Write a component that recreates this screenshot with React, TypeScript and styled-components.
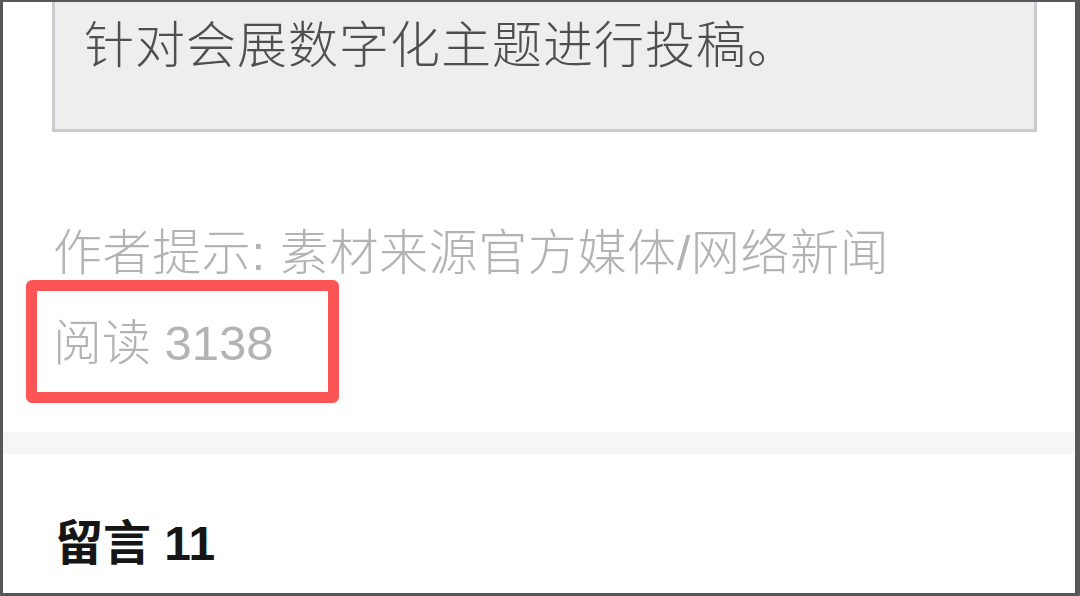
import styled, { createGlobalStyle } from "styled-components";

const GlobalStyle = createGlobalStyle`
  html, body {
    margin: 0;
    padding: 0;
    background: #fff;
  }
`;

const Frame = styled.div`
  box-sizing: border-box;
  width: 1080px;
  height: 596px;
  overflow: hidden;
  background: #fff;
  border-style: solid;
  border-color: #585858;
  border-width: 2px 5px 3px 3px;
  font-family: "Liberation Sans", "Noto Sans CJK SC", sans-serif;
`;

// 引用块 (顶部被截掉)
const Quote = styled.div`
  box-sizing: border-box;
  margin: 0 38px 0 49px;
  height: 130px;
  padding: 11px 0 0 29px;
  background: #eeeeee;
  border: 3px solid #c9cbd0;
  border-top: none;
  color: #4f4f4f;
  font-size: 50px;
  font-weight: 300;
  line-height: 67px;
  letter-spacing: 1px;
`;

const Body = styled.div`
  padding: 0 0 0 50px;
`;

const Line = styled.div<{ $top?: number; $spacing?: number }>`
  position: relative;
  margin-top: ${(p) => p.$top ?? 0}px;
  color: #b3b3b3;
  font-size: 49px;
  font-weight: 300;
  line-height: 90px;
  letter-spacing: ${(p) => p.$spacing ?? 0}px;
  white-space: nowrap;
`;

// 红色标注框
const Highlight = styled.div`
  position: absolute;
  top: -18px;
  left: -27px;
  width: 313px;
  height: 123px;
  box-sizing: border-box;
  border: 11px solid #fd5455;
  border-radius: 6px;
`;

const Divider = styled.div`
  height: 22px;
  margin: 44px 0 44px;
  background: #f6f6f6;
`;

const CommentTitle = styled.div`
  padding-left: 52px;
  color: #161616;
  font-size: 48px;
  font-weight: 700;
  line-height: 92px;
`;

export default function App() {
  return (
    <>
      <GlobalStyle />
      <Frame>
        <Quote>针对会展数字化主题进行投稿。</Quote>
        <Body>
          <Line $top={76} $spacing={0.6}>
            作者提示: 素材来源官方媒体/网络新闻
          </Line>
          <Line>
            阅读 3138
            <Highlight />
          </Line>
        </Body>
        <Divider />
        <CommentTitle>留言 11</CommentTitle>
      </Frame>
    </>
  );
}
